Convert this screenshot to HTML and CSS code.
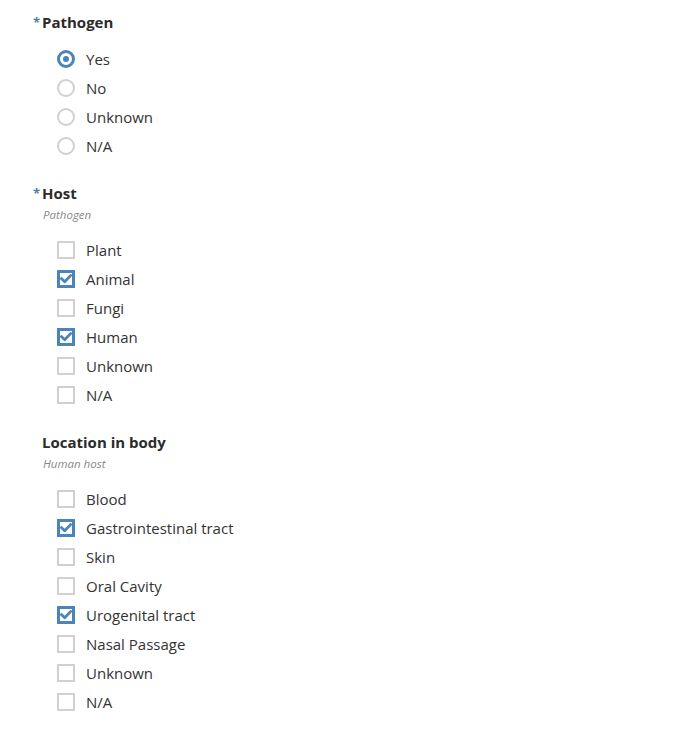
FILE: index.html
```html
<!DOCTYPE html>
<html lang="en">
<head>
<meta charset="utf-8">
<title>Form</title>
<link rel="stylesheet" href="styles.css">
</head>
<body>
<div class="form">
  <div class="field first">
    <div class="title"><span class="req">*</span>Pathogen</div>
    <div class="options">
      <label class="option"><span class="radio checked"></span><span class="text">Yes</span></label>
      <label class="option"><span class="radio"></span><span class="text">No</span></label>
      <label class="option"><span class="radio"></span><span class="text">Unknown</span></label>
      <label class="option"><span class="radio"></span><span class="text">N/A</span></label>
    </div>
  </div>
  <div class="field">
    <div class="title"><span class="req">*</span>Host</div>
    <div class="desc">Pathogen</div>
    <div class="options">
      <label class="option"><span class="box"></span><span class="text">Plant</span></label>
      <label class="option"><span class="box checked"><svg viewBox="0 0 12 12"><path d="M1.4 5.6 L4.7 8.7 L10.8 2.4"/></svg></span><span class="text">Animal</span></label>
      <label class="option"><span class="box"></span><span class="text">Fungi</span></label>
      <label class="option"><span class="box checked"><svg viewBox="0 0 12 12"><path d="M1.4 5.6 L4.7 8.7 L10.8 2.4"/></svg></span><span class="text">Human</span></label>
      <label class="option"><span class="box"></span><span class="text">Unknown</span></label>
      <label class="option"><span class="box"></span><span class="text">N/A</span></label>
    </div>
  </div>
  <div class="field">
    <div class="title"><span class="req"></span>Location in body</div>
    <div class="desc">Human host</div>
    <div class="options">
      <label class="option"><span class="box"></span><span class="text">Blood</span></label>
      <label class="option"><span class="box checked"><svg viewBox="0 0 12 12"><path d="M1.4 5.6 L4.7 8.7 L10.8 2.4"/></svg></span><span class="text">Gastrointestinal tract</span></label>
      <label class="option"><span class="box"></span><span class="text">Skin</span></label>
      <label class="option"><span class="box"></span><span class="text">Oral Cavity</span></label>
      <label class="option"><span class="box checked"><svg viewBox="0 0 12 12"><path d="M1.4 5.6 L4.7 8.7 L10.8 2.4"/></svg></span><span class="text">Urogenital tract</span></label>
      <label class="option"><span class="box"></span><span class="text">Nasal Passage</span></label>
      <label class="option"><span class="box"></span><span class="text">Unknown</span></label>
      <label class="option"><span class="box"></span><span class="text">N/A</span></label>
    </div>
  </div>
</div>
</body>
</html>
```
FILE: styles.css
```css
html, body {
  margin: 0;
  padding: 0;
  background: #ffffff;
}
body {
  font-family: "Open Sans", "Liberation Sans", sans-serif;
  color: #333333;
}
.form {
  padding: 12px 0 20px 33px;
}
.field {
  margin-top: 23px;
}
.field.first {
  margin-top: 0;
}
.title {
  font-size: 15px;
  font-weight: 700;
  line-height: 20px;
  height: 20px;
  color: #2b2b2b;
}
.req {
  display: inline-block;
  vertical-align: top;
  width: 9px;
  height: 20px;
  line-height: 20px;
  color: #4a7fb0;
  font-size: 13px;
}
.desc {
  margin-top: 5px;
  padding-left: 10px;
  font-size: 11.5px;
  line-height: 14px;
  font-style: italic;
  color: #888888;
}
.options {
  margin-top: 13px;
}
.field.first .options {
  margin-top: 12px;
}
.option {
  display: flex;
  align-items: center;
  height: 29px;
  padding-left: 24px;
  gap: 11px;
}
.text {
  font-size: 15px;
  line-height: 20px;
  color: #333333;
}
.radio {
  box-sizing: border-box;
  width: 18px;
  height: 18px;
  border-radius: 50%;
  border: 2px solid #d0d0d0;
  display: flex;
  align-items: center;
  justify-content: center;
}
.radio.checked {
  border: 3px solid #4a84b8;
}
.radio.checked::after {
  content: "";
  width: 6px;
  height: 6px;
  border-radius: 50%;
  background: #4a84b8;
}
.box {
  box-sizing: border-box;
  width: 18px;
  height: 18px;
  border: 2px solid #d0d0d0;
  display: flex;
}
.box.checked {
  border: 3px solid #4a84b8;
}
.box svg {
  width: 12px;
  height: 12px;
  fill: none;
  stroke: #4a84b8;
  stroke-width: 2.8;
  stroke-linecap: round;
  stroke-linejoin: round;
}
```
